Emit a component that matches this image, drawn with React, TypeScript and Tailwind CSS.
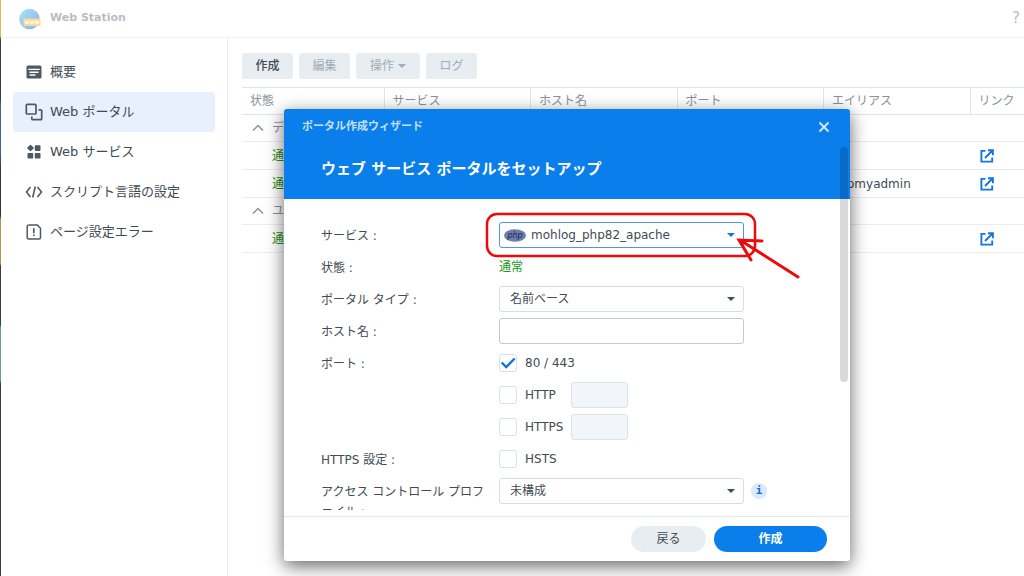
import { useState, type ReactNode } from "react";
import clsx from "clsx";

const OverviewIcon = () => (
  <svg viewBox="0 0 16 16" className="h-4 w-4 shrink-0" aria-hidden="true">
    <path fill="#4f5963" d="M2 1.500h12a1.500 1.500 0 0 1 1.500 1.500v10a1.500 1.500 0 0 1-1.500 1.500H2A1.500 1.500 0 0 1 .5 13V3A1.500 1.500 0 0 1 2 1.500z" />
    <path stroke="#fff" strokeWidth="1.400" d="M2.300 5.400h11.400M3.500 8.300h9M3.500 11h6" />
  </svg>
);

const PortalIcon = () => (
  <svg viewBox="0 0 18 18" className="-mx-px h-[18px] w-[18px] shrink-0" fill="none" stroke="#4f5963" strokeWidth="1.700" aria-hidden="true">
    <rect x="1.300" y="1.300" width="9.700" height="9.700" rx="1" />
    <path d="M13.500 6.800h2.200a1 1 0 0 1 1 1v7.900a1 1 0 0 1-1 1H7.800a1 1 0 0 1-1-1v-2.200" />
  </svg>
);

const ServiceIcon = () => (
  <svg viewBox="0 0 16 16" className="h-4 w-4 shrink-0" fill="#4f5963" aria-hidden="true">
    <path d="M4.500 1.300 7.200 4 4.500 6.700 1.800 4z" stroke="#4f5963" strokeWidth="1.200" strokeLinejoin="round" />
    <rect x="8.800" y="1.200" width="5.700" height="5.700" rx=".8" />
    <rect x="1.500" y="9" width="5.700" height="5.500" rx=".8" />
    <rect x="8.800" y="9" width="5.700" height="5.500" rx=".8" />
  </svg>
);

const ScriptIcon = () => (
  <svg viewBox="0 0 18 16" className="-mx-px h-4 w-[18px] shrink-0" fill="none" stroke="#4f5963" strokeWidth="1.600" aria-hidden="true">
    <path d="M5.500 3 1.500 8l4 5M12.500 3l4 5-4 5M10.300 2.500 7.700 13.500" />
  </svg>
);

const ErrorPageIcon = () => (
  <svg viewBox="0 0 16 16" className="h-4 w-4 shrink-0" fill="none" stroke="#4f5963" strokeWidth="1.500" aria-hidden="true">
    <path d="M2.500 1h8.800l3.200 3.200v9.300a1.500 1.500 0 0 1-1.500 1.500H2.700a1.500 1.500 0 0 1-1.500-1.500v-11A1.500 1.500 0 0 1 2.700 1z" />
    <path d="M7.800 4.200v5M7.800 10.500v1.600" strokeWidth="1.700" />
  </svg>
);

const Logo = () => (
  <svg viewBox="0 0 22 22" className="h-[22px] w-[22px]" aria-hidden="true">
    <defs>
      <linearGradient id="globe" x1="0" y1="0" x2="1" y2="1">
        <stop offset="0" stopColor="#a9e4f4" />
        <stop offset=".6" stopColor="#98c2f1" />
        <stop offset="1" stopColor="#92abea" />
      </linearGradient>
    </defs>
    <circle cx="10.500" cy="11" r="10.300" fill="url(#globe)" />
    <rect x="4.500" y="10.500" width="17" height="7.500" rx="1" fill="#f6dc96" />
    <path
      d="m6 12.500 1 3.500 1-3 1 3 1-3.500m1 0 1 3.500 1-3 1 3 1-3.500m1 0 1 3.500 1-3 1 3 1-3.500"
      fill="none"
      stroke="#fff"
      strokeWidth=".8"
    />
  </svg>
);

const ExternalIcon = () => (
  <svg viewBox="0 0 14 14" className="h-3.5 w-3.5" fill="none" stroke="#1474e0" strokeWidth="1.900" aria-hidden="true">
    <path d="M5.500 1.900H1.400v10.700h10.800V8.500M5 9l7-7M8 1.300h4.900v4.900" />
  </svg>
);

const Caret = ({ className }: { className?: string }) => (
  <svg viewBox="0 0 8 4" className={clsx("h-1 w-2", className)} fill="currentColor" aria-hidden="true">
    <path d="M0 0h8L4 4z" />
  </svg>
);

const PhpIcon = () => (
  <svg viewBox="0 0 22 13" className="pointer-events-none absolute top-[7px] left-[5px] h-[13px] w-[22px]" aria-hidden="true">
    <ellipse cx="11" cy="6.500" rx="11" ry="6.200" fill="#6c7eb1" />
    <text x="11" y="9" textAnchor="middle" fontSize="8" fontStyle="italic" fontFamily="DejaVu Sans, sans-serif" fill="#20253f">
      php
    </text>
  </svg>
);

const menu = [
  { label: "概要", icon: <OverviewIcon /> },
  { label: "Web ポータル", icon: <PortalIcon /> },
  { label: "Web サービス", icon: <ServiceIcon /> },
  { label: "スクリプト言語の設定", icon: <ScriptIcon /> },
  { label: "ページ設定エラー", icon: <ErrorPageIcon /> },
];

const Sidebar = () => {
  const [active, setActive] = useState(1);
  return (
    <nav className="w-[227px] shrink-0 border-r border-[#e8edf6] px-3 py-3.5">
      {menu.map((item, i) => (
        <button
          key={item.label}
          onClick={() => setActive(i)}
          className={clsx(
            "flex h-10 w-full items-center gap-2 rounded pl-[13px] text-[13px] text-[#414b55]",
            i === active && "bg-[#e8f0fd]"
          )}
        >
          {item.icon}
          {item.label}
        </button>
      ))}
    </nav>
  );
};

const Toolbar = () => (
  <div className="flex gap-1.5 pt-[15px] pb-2 text-[12px] text-[#a3abb3]">
    <button className="h-[26px] w-[51px] rounded-[3px] bg-[#e8edf2] font-medium text-[#414b55]">作成</button>
    <button className="h-[26px] w-[51px] rounded-[3px] bg-[#e8edf2]">編集</button>
    <button className="flex h-[26px] w-16 items-center justify-center gap-1 rounded-[3px] bg-[#e8edf2]">
      操作
      <Caret />
    </button>
    <button className="h-[26px] w-[51px] rounded-[3px] bg-[#e8edf2]">ログ</button>
  </div>
);

const Group = ({ name }: { name: string }) => (
  <tr className="h-[27px] border-b border-[#e9edf0]">
    <td colSpan={6} className="pl-2.5 text-[#8a9299]">
      <div className="flex items-center gap-2">
        <svg viewBox="0 0 12 8" className="h-2 w-3" fill="none" stroke="#8a9299" strokeWidth="1.500" aria-hidden="true">
          <path d="m1 6.500 5-5 5 5" />
        </svg>
        {name}
      </div>
    </td>
  </tr>
);

const Portal = ({ alias }: { alias?: string }) => (
  <tr className="h-7 border-b border-[#e9edf0]">
    <td className="pl-[30px] text-[#1b8f16]">通常</td>
    <td />
    <td />
    <td />
    <td className="pl-2">{alias}</td>
    <td className="pl-2.5">
      <a href="#" aria-label="リンク" className="inline-block align-middle">
        <ExternalIcon />
      </a>
    </td>
  </tr>
);

const PortalTable = () => (
  <table className="w-full table-fixed border-collapse text-left text-[12px]">
    <thead>
      <tr className="h-[27px] border-t border-b border-[#dfe4e9] text-[#8a9299]">
        <th className="w-[142px] pl-2 font-normal">状態</th>
        <th className="border-l border-[#e3e7ec] pl-2 font-normal">サービス</th>
        <th className="border-l border-[#e3e7ec] pl-2 font-normal">ホスト名</th>
        <th className="border-l border-[#e3e7ec] pl-2 font-normal">ポート</th>
        <th className="border-l border-[#e3e7ec] pl-2 font-normal">エイリアス</th>
        <th className="w-[54px] border-l border-[#e3e7ec] pl-2 font-normal">リンク</th>
      </tr>
    </thead>
    <tbody>
      <Group name="デ" />
      <Portal />
      <Portal alias="phpmyadmin" />
      <Group name="ユ" />
      <Portal />
    </tbody>
  </table>
);

const Row = ({ label, htmlFor, children }: { label?: string; htmlFor?: string; children: ReactNode }) => (
  <div className="flex min-h-8 items-start">
    <label htmlFor={htmlFor} className="w-[178px] shrink-0 pt-[7px] pr-2 leading-5">
      {label}
    </label>
    <div className="flex h-8 items-center">{children}</div>
  </div>
);

const Select = ({ id, value, active }: { id: string; value: string; active?: boolean }) => (
  <div className="relative w-[245px]">
    <select
      id={id}
      className={clsx(
        "h-[26px] w-full appearance-none rounded-[3px] border bg-white",
        active ? "border-[#4c95e8] pl-[31px]" : "border-[#d7dde3] pl-2.5"
      )}
    >
      <option>{value}</option>
    </select>
    {active && <PhpIcon />}
    <Caret className={clsx("pointer-events-none absolute top-[11px] right-[9px]", active && "text-[#1474e0]")} />
  </div>
);

const Check = ({ label, checked, port }: { label: string; checked?: boolean; port?: boolean }) => (
  <>
    <label className="flex w-[72px] items-center gap-2 whitespace-nowrap">
      <span className="relative flex">
        <input
          type="checkbox"
          defaultChecked={checked}
          className="peer h-[18px] w-[18px] appearance-none rounded-[3px] border border-[#d9e0e8] bg-white"
        />
        <svg
          viewBox="0 0 18 18"
          className="pointer-events-none absolute inset-0 hidden peer-checked:block"
          fill="none"
          stroke="#1474e0"
          strokeWidth="2.400"
          aria-hidden="true"
        >
          <path d="m2.700 8.500 4.500 4.500 8.500-8.500" />
        </svg>
      </span>
      {label}
    </label>
    {port && (
      <input
        disabled
        aria-label={label + " port"}
        className="h-[26px] w-[57px] rounded-[3px] border border-[#dce2ea] bg-[#f2f5fa] px-2"
      />
    )}
  </>
);

// hand drawn marker around the service select
const Marker = () => (
  <svg
    viewBox="0 0 320 70"
    className="pointer-events-none absolute top-3 left-[200px] h-[70px] w-80"
    fill="none"
    stroke="#ee0a0a"
    strokeLinecap="round"
    aria-hidden="true"
  >
    <rect x="3" y="3" width="268" height="42" rx="10" strokeWidth="2.500" />
    <path d="M314 66 256 29M278 30l-23-1 12 20" strokeWidth="3" />
  </svg>
);

const Wizard = () => (
  <section
    role="dialog"
    aria-labelledby="wizard-title"
    className="absolute top-[109px] left-[284px] w-[566px] overflow-hidden rounded-[3px] bg-white text-[12px] shadow-[0_5px_18px_rgba(0,0,0,0.6)]"
  >
    <header className="h-[90px] bg-[#0a7eea] text-white">
      <div className="flex items-center justify-between pt-2 pr-5 pl-[18px]">
        <p className="text-[11px] leading-5 font-bold text-[#c4e0fb]">ポータル作成ウィザード</p>
        <button aria-label="閉じる">
          <svg viewBox="0 0 12 12" className="h-3 w-3" stroke="#cfe6fc" strokeWidth="2" aria-hidden="true">
            <path d="m1.500 1.500 9 9M10.500 1.500l-9 9" />
          </svg>
        </button>
      </div>
      <h1 id="wizard-title" className="pt-5 pl-[37px] text-[15px] leading-6 font-bold">
        ウェブ サービス ポータルをセットアップ
      </h1>
    </header>
    <div className="relative">
      <form className="h-[311px] overflow-y-hidden pt-5 pl-[37px]">
        <Row label="サービス :" htmlFor="service">
          <Select id="service" value="mohlog_php82_apache" active />
        </Row>
        <Row label="状態 :">
          <span className="text-[#1b9a16]">通常</span>
        </Row>
        <Row label="ポータル タイプ :" htmlFor="type">
          <Select id="type" value="名前ベース" />
        </Row>
        <Row label="ホスト名 :" htmlFor="host">
          <input id="host" className="h-[26px] w-[245px] rounded-[3px] border border-[#c3c8ce] px-2.5" />
        </Row>
        <Row label="ポート :">
          <Check label="80 / 443" checked />
        </Row>
        <Row>
          <Check label="HTTP" port />
        </Row>
        <Row>
          <Check label="HTTPS" port />
        </Row>
        <Row label="HTTPS 設定 :">
          <Check label="HSTS" />
        </Row>
        <Row label="アクセス コントロール プロファイル :" htmlFor="access">
          <Select id="access" value="未構成" />
          <span className="ml-[7px] flex h-4 w-4 items-center justify-center rounded-full bg-[#d9eafc] font-[DejaVu_Sans_Mono] text-[11px] font-bold text-[#1a66dd]">
            i
          </span>
        </Row>
      </form>
      <Marker />
    </div>
    <footer className="mt-1.5 flex h-[45px] items-center justify-end gap-2 border-t border-[#e2e9ef] pr-[23px]">
      <button className="h-[26px] w-[75px] rounded-full bg-[#e8edf2]">戻る</button>
      <button className="h-[26px] w-[113px] rounded-full bg-[#0a7eea] font-bold text-white">作成</button>
    </footer>
    <div className="absolute top-[38px] right-0.5 h-[235px] w-2 rounded bg-black/15" />
  </section>
);

export default function App() {
  return (
    <div className="relative flex h-screen overflow-hidden bg-white font-['DejaVu_Sans','Noto_Sans_CJK_JP',sans-serif] text-[#414b55]">
      <div className="w-px shrink-0 bg-[linear-gradient(#e8b45a_0_36px,#3b3b40_40px_100px,#4660a0_104px_150px,#35363c_170px_216px,#b8945a_220px_264px,#3a3a40_266px_325px,#6a9d98_327px_380px,#3c3c40_384px)]" />
      <div className="flex min-w-0 flex-1 flex-col">
        <header className="flex h-[38px] shrink-0 items-center border-b border-[#f1f3f6] pr-1 pl-[18px]">
          <Logo />
          <span className="ml-[9px] flex-1 text-[11px] font-bold text-[#b9bdc1]">Web Station</span>
          <button className="text-[15px] text-[#b9bdc1]">?</button>
        </header>
        <div className="flex flex-1">
          <Sidebar />
          <main className="min-w-0 flex-1 pl-3.5">
            <Toolbar />
            <PortalTable />
          </main>
        </div>
      </div>
      <Wizard />
    </div>
  );
}
